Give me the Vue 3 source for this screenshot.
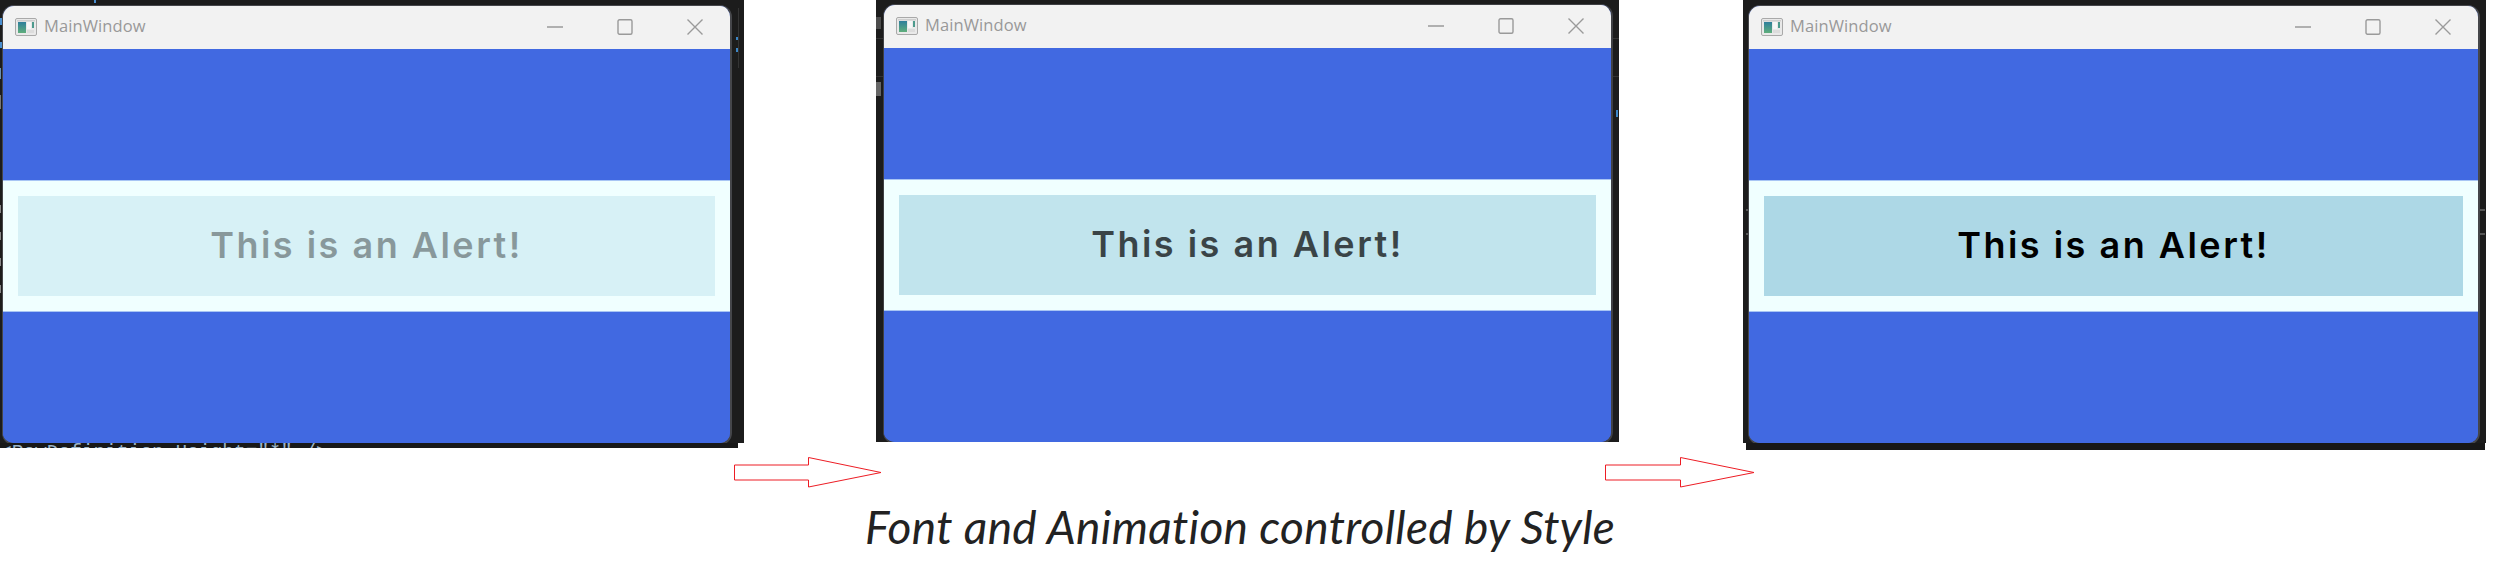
<script setup>
const shots = [
  {
    id: 'a', level: 0.37,
    ticks: [
      [0, 18, 2, 7, '#4a8fd0'], [0, 42, 2, 6, '#4a8fd0'], [0, 68, 1, 11, '#6a8fb0'], [0, 95, 1, 14, '#777'],
      [0, 205, 1, 8, '#888'], [0, 232, 1, 8, '#888'], [0, 258, 1, 8, '#888'], [0, 285, 1, 8, '#888'],
      [94, 0, 2, 3, '#4a8fd0'], [736, 37, 3, 3, '#3d86c6'], [736, 48, 3, 4, '#3d86c6'], [738, 8, 1, 60, '#333']
    ]
  },
  {
    id: 'b', level: 0.7,
    ticks: [
      [0, 17, 5, 12, '#4c4c4c'], [0, 82, 5, 14, '#666'], [0, 38, 8, 1, '#333'], [0, 76, 8, 1, '#333'],
      [740, 110, 2, 7, '#3d86c6'], [736, 38, 7, 1, '#333'], [736, 76, 7, 1, '#333']
    ]
  },
  {
    id: 'c', level: 1,
    ticks: [
      [3, 209, 3, 2, '#555'], [3, 233, 3, 2, '#555'], [737, 209, 5, 2, '#555'], [737, 233, 5, 2, '#555']
    ]
  }
]
</script>

<template>
  <div class="page">
    <div class="shots">
      <figure v-for="shot in shots" :key="shot.id" class="shot" :class="'shot-' + shot.id">
        <div class="desk">
          <i
            v-for="(t, n) in shot.ticks"
            :key="n"
            class="tick"
            :style="{ left: t[0] + 'px', top: t[1] + 'px', width: t[2] + 'px', height: t[3] + 'px', background: t[4] }"
          ></i>
          <section class="window">
            <header class="titlebar">
              <svg class="app-icon" width="22" height="18" viewBox="0 0 22 18">
                <defs>
                  <linearGradient :id="'pane-' + shot.id" x1="0" y1="0" x2="0" y2="1">
                    <stop offset="0" stop-color="#2f7f9c" />
                    <stop offset="1" stop-color="#5fae7c" />
                  </linearGradient>
                </defs>
                <rect x="0.5" y="0.5" width="21" height="17" rx="1.5" fill="#e9e9e9" stroke="#a9a9a9" />
                <rect x="2" y="2" width="18" height="1.5" fill="#cfcfcf" />
                <rect x="3" y="4" width="8" height="11" :fill="'url(#pane-' + shot.id + ')'" />
                <rect x="12" y="4" width="4" height="7" fill="#f7f7f7" />
                <rect x="17" y="4" width="2" height="6" fill="#4d9a8d" />
                <rect x="12" y="12" width="7" height="3" fill="#dcdcdc" />
              </svg>
              <span class="title">MainWindow</span>
              <div class="caption-buttons">
                <span class="caption-button">
                  <svg width="16" height="16" viewBox="0 0 16 16"><path d="M0 8h16" /></svg>
                </span>
                <span class="caption-button">
                  <svg width="16" height="16" viewBox="0 0 16 16"><rect x="1" y="0.75" width="14" height="14.5" rx="1.5" /></svg>
                </span>
                <span class="caption-button">
                  <svg width="16" height="16" viewBox="0 0 16 16"><path d="M0.5 0.5 15.5 15.5M15.5 0.5 0.5 15.5" /></svg>
                </span>
              </div>
            </header>
            <div class="content">
              <div class="sky"></div>
              <div class="band">
                <div class="alert-fill">
                  <div class="alert-tint" :style="{ opacity: shot.level }"></div>
                  <p class="alert-text" :style="{ opacity: shot.level }">This is an Alert!</p>
                </div>
              </div>
              <div class="sky"></div>
            </div>
          </section>
        </div>
        <div class="desk-tail">
          <code v-if="shot.id === 'a'" class="code-line">&lt;RowDefinition Height="*" /&gt;</code>
        </div>
      </figure>
    </div>

    <div class="arrows">
      <svg class="arrow" width="148" height="31" viewBox="0 0 148 31">
        <polygon points="0.5,8 74.5,8 74.5,0.5 147,15.5 74.5,30 74.5,23 0.5,23" />
      </svg>
      <svg class="arrow arrow-second" width="150" height="31" viewBox="0 0 150 31">
        <polygon points="0.5,8 75.5,8 75.5,0.5 149,15.5 75.5,30 75.5,23 0.5,23" />
      </svg>
    </div>

    <p class="caption">Font and Animation controlled by Style</p>
  </div>
</template>

<style scoped>
.page {
  width: 2513px;
  height: 568px;
  overflow: hidden;
  background: #ffffff;
  font-family: "Open Sans", "Noto Sans", sans-serif;
}

.shots {
  display: flex;
  align-items: flex-start;
  height: 450px;
}

.shot {
  margin: 0;
  display: flex;
  flex-direction: column;
}

.shot-a { width: 744px; }
.shot-b { width: 743px; margin-left: 132px; }
.shot-c { width: 743px; margin-left: 124px; }

.desk {
  position: relative;
  box-sizing: border-box;
  background: #1c1c1c;
  overflow: hidden;
}

.shot-a .desk { height: 443px; padding: 5px 12px 0 2px; }
.shot-b .desk { height: 442px; padding: 4px 6px 0 7px; }
.shot-c .desk { height: 443px; padding: 5px 6px 0 5px; }

.tick {
  position: absolute;
}

.window {
  position: relative;
  box-sizing: border-box;
  height: 440px;
  display: flex;
  flex-direction: column;
  border: solid #45464a;
  border-width: 1px 2px 2px 1px;
  border-radius: 12px;
  overflow: hidden;
  background: #4169e1;
}

.shot-b .window { border-color: #3f4044; }

.titlebar {
  flex: 0 0 43px;
  box-sizing: border-box;
  display: flex;
  align-items: center;
  background: #f2f2f2;
  padding: 0 0 2px 12px;
}

.app-icon {
  flex: none;
}

.title {
  margin: -1px 0 0 7px;
  font-size: 16.5px;
  line-height: 24px;
  color: #999999;
  letter-spacing: 0.1px;
}

.caption-buttons {
  margin-left: auto;
  display: flex;
}

.caption-button {
  width: 70px;
  display: flex;
  align-items: center;
  justify-content: center;
}

.caption-button svg {
  display: block;
  fill: none;
  stroke: #9a9a9a;
  stroke-width: 1.4;
}

.content {
  flex: 1;
  display: flex;
  flex-direction: column;
}

.sky {
  flex: 1;
  background: #4169e1;
}

.band {
  flex: 0 0 132px;
  display: flex;
  box-sizing: border-box;
  border-block: 1px solid #a8c5f4;
  background: #f0ffff;
  padding: 15px;
}

.alert-fill {
  position: relative;
  flex: 1;
  display: flex;
  align-items: center;
  justify-content: center;
}

.alert-tint {
  position: absolute;
  inset: 0;
  background: #add8e6;
}

.alert-text {
  position: relative;
  margin: 0 0 2px;
  font-family: "Inter", "Liberation Sans", sans-serif;
  font-size: 36px;
  font-weight: 600;
  line-height: 44px;
  letter-spacing: 2.5px;
  color: #000000;
}

.desk-tail {
  overflow: hidden;
  background: #181818;
}

.shot-a .desk-tail { width: 738px; height: 5px; }
.shot-b .desk-tail { height: 0; }
.shot-c .desk-tail { width: 739px; height: 7px; margin-left: 3px; }

.code-line {
  display: block;
  margin-top: -1px;
  font-family: "Liberation Mono", monospace;
  font-size: 19.5px;
  line-height: 22px;
  color: #9cb4c8;
  white-space: pre;
}

.arrows {
  display: flex;
  align-items: flex-start;
  height: 30px;
  padding: 7px 0 0 734px;
}

.arrow {
  display: block;
  flex: none;
}

.arrow-second {
  margin-left: 723px;
}

.arrow polygon {
  fill: #ffffff;
  stroke: #ed1c24;
  stroke-width: 1;
}

.caption {
  margin: 14px 0 0 865px;
  font-family: "Lato", "Open Sans", sans-serif;
  font-style: italic;
  font-size: 46px;
  line-height: 52px;
  letter-spacing: 0.3px;
  color: #222222;
  white-space: nowrap;
}
</style>
